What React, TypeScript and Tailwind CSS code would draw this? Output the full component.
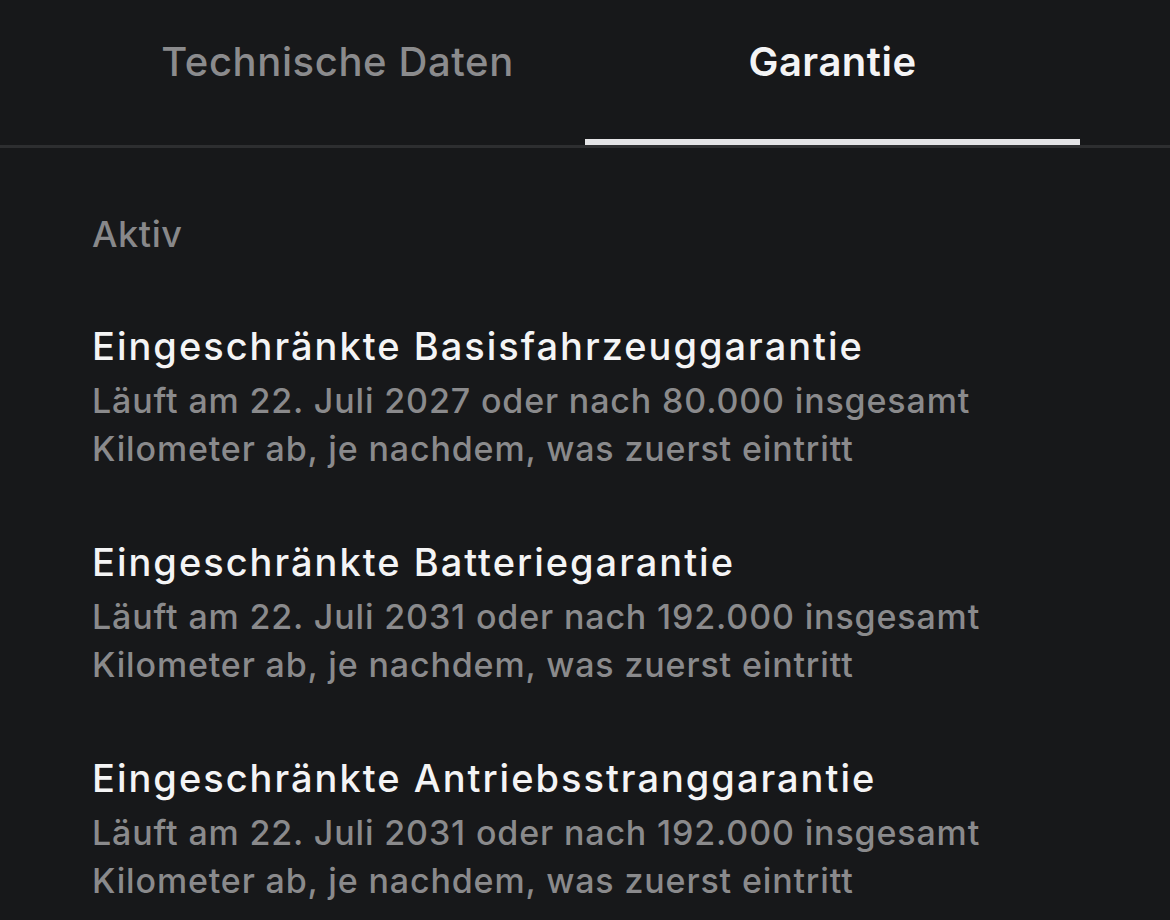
const font = { fontFamily: 'Inter, "Noto Sans", sans-serif' }

const WARRANTIES = [
  {
    title: 'Eingeschränkte Basisfahrzeuggarantie',
    line1: 'Läuft am 22. Juli 2027 oder nach 80.000 insgesamt',
    line2: 'Kilometer ab, je nachdem, was zuerst eintritt',
  },
  {
    title: 'Eingeschränkte Batteriegarantie',
    line1: 'Läuft am 22. Juli 2031 oder nach 192.000 insgesamt',
    line2: 'Kilometer ab, je nachdem, was zuerst eintritt',
  },
  {
    title: 'Eingeschränkte Antriebsstranggarantie',
    line1: 'Läuft am 22. Juli 2031 oder nach 192.000 insgesamt',
    line2: 'Kilometer ab, je nachdem, was zuerst eintritt',
  },
]

export default function App() {
  return (
    <div className="w-[1170px] h-[920px] overflow-hidden bg-[#17181a]" style={font}>
      {/* Tabs */}
      <div className="border-b-[3px] border-[#2d2e30]">
        <div className="grid grid-cols-2 px-[90px]">
          <button className="h-[145px] pb-[21px] flex items-center justify-center text-[40px] font-medium text-[#8b8b8d] tracking-[0.6px]">
            Technische Daten
          </button>
          <button className="relative h-[145px] pb-[21px] flex items-center justify-center text-[40px] font-semibold text-[#f4f4f5] tracking-[0.5px]">
            Garantie
            <span className="absolute left-0 right-0 bottom-0 h-[6px] bg-[#e4e4e6]" />
          </button>
        </div>
      </div>

      {/* Inhalt */}
      <div className="pl-[92px] pt-[62px]">
        <p className="text-[36px] leading-[48px] font-medium text-[#88888a] tracking-[0.6px]">Aktiv</p>
        <div className="mt-[64px] flex flex-col gap-[65px]">
          {WARRANTIES.map((w) => (
            <div key={w.title}>
              <h3 className="text-[38px] leading-[48px] font-medium text-[#f4f4f5] tracking-[2px]">{w.title}</h3>
              <p className="mt-[7px] text-[34px] leading-[48px] font-medium text-[#8a8a8c] tracking-[0.85px]">
                {w.line1}
                <br />
                {w.line2}
              </p>
            </div>
          ))}
        </div>
      </div>
    </div>
  )
}
